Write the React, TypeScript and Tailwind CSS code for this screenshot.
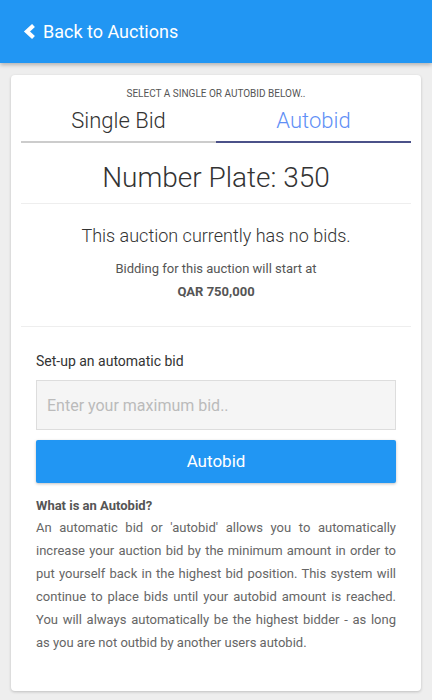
export default function App() {
  return (
    <div className="min-h-[700px] bg-[#eeeeee] font-['Roboto',sans-serif]">
      <header className="flex h-[63px] items-center bg-[#2196f3] pl-[23px] text-white shadow-[0_2px_4px_rgba(0,0,0,0.25)]">
        <svg width="14" height="17" viewBox="0 0 14 17" className="mr-[6px]">
          <polyline
            points="10.5,2.5 4,8.5 10.5,14.5"
            fill="none"
            stroke="white"
            strokeWidth="4.2"
            strokeLinejoin="miter"
            strokeLinecap="butt"
          />
        </svg>
        <span className="text-[18px] leading-none">Back to Auctions</span>
      </header>

      <main className="px-[11px] pt-[12px] pb-[11px]">
        <div className="rounded-[4px] bg-white px-[10px] pb-[37px] pt-[13px] shadow-[0_1px_3px_rgba(0,0,0,0.2)]">
          <p className="text-center text-[10px] uppercase leading-[12px] text-[#555]">
            Select a single or autobid below..
          </p>

          <div className="mt-[7px] flex">
            <div className="flex-1 border-b-2 border-[#cccccc] pb-[6px] text-center text-[22px] font-light leading-[28px] text-[#333]">
              Single Bid
            </div>
            <div className="flex-1 border-b-2 border-[#4b5189] pb-[6px] text-center text-[22px] font-light leading-[28px] text-[#5f8ff6]">
              Autobid
            </div>
          </div>

          <h1 className="mt-[17px] border-b border-[#eeeeee] pb-[7px] text-center text-[28px] font-light leading-[36px] text-[#333]">
            Number Plate: 350
          </h1>

          <div className="border-b border-[#eeeeee] pb-[24px] pt-[20px] text-center">
            <p className="text-[18px] font-light leading-[24px] text-[#333]">
              This auction currently has no bids.
            </p>
            <p className="mt-[11px] text-[13px] leading-[20px] text-[#555]">
              Bidding for this auction will start at
            </p>
            <p className="mt-[3px] text-[13px] font-bold leading-[20px] text-[#555]">
              QAR 750,000
            </p>
          </div>

          <div className="px-[15px] pt-[24px]">
            <label className="block text-[14px] leading-[20px] text-[#333]">
              Set-up an automatic bid
            </label>
            <input
              type="text"
              placeholder="Enter your maximum bid.."
              className="mt-[9px] h-[50px] w-full border border-[#dddddd] bg-[#f5f5f5] px-[10px] text-[16px] text-[#333] outline-none placeholder:text-[#bbbbbb]"
            />
            <button className="mt-[10px] h-[43px] w-full rounded-[2px] bg-[#2196f3] text-[17px] text-white shadow-[0_1px_3px_rgba(0,0,0,0.25)]">
              Autobid
            </button>

            <h2 className="mt-[13px] text-[13px] font-bold leading-[20px] text-[#555]">
              What is an Autobid?
            </h2>
            <p className="text-justify text-[13px] leading-[23px] text-[#666]">
              An automatic bid or 'autobid' allows you to automatically increase your auction bid by the
              minimum amount in order to put yourself back in the highest bid position. This system will
              continue to place bids until your autobid amount is reached. You will always automatically
              be the highest bidder - as long as you are not outbid by another users autobid.
            </p>
          </div>
        </div>
      </main>
    </div>
  );
}
